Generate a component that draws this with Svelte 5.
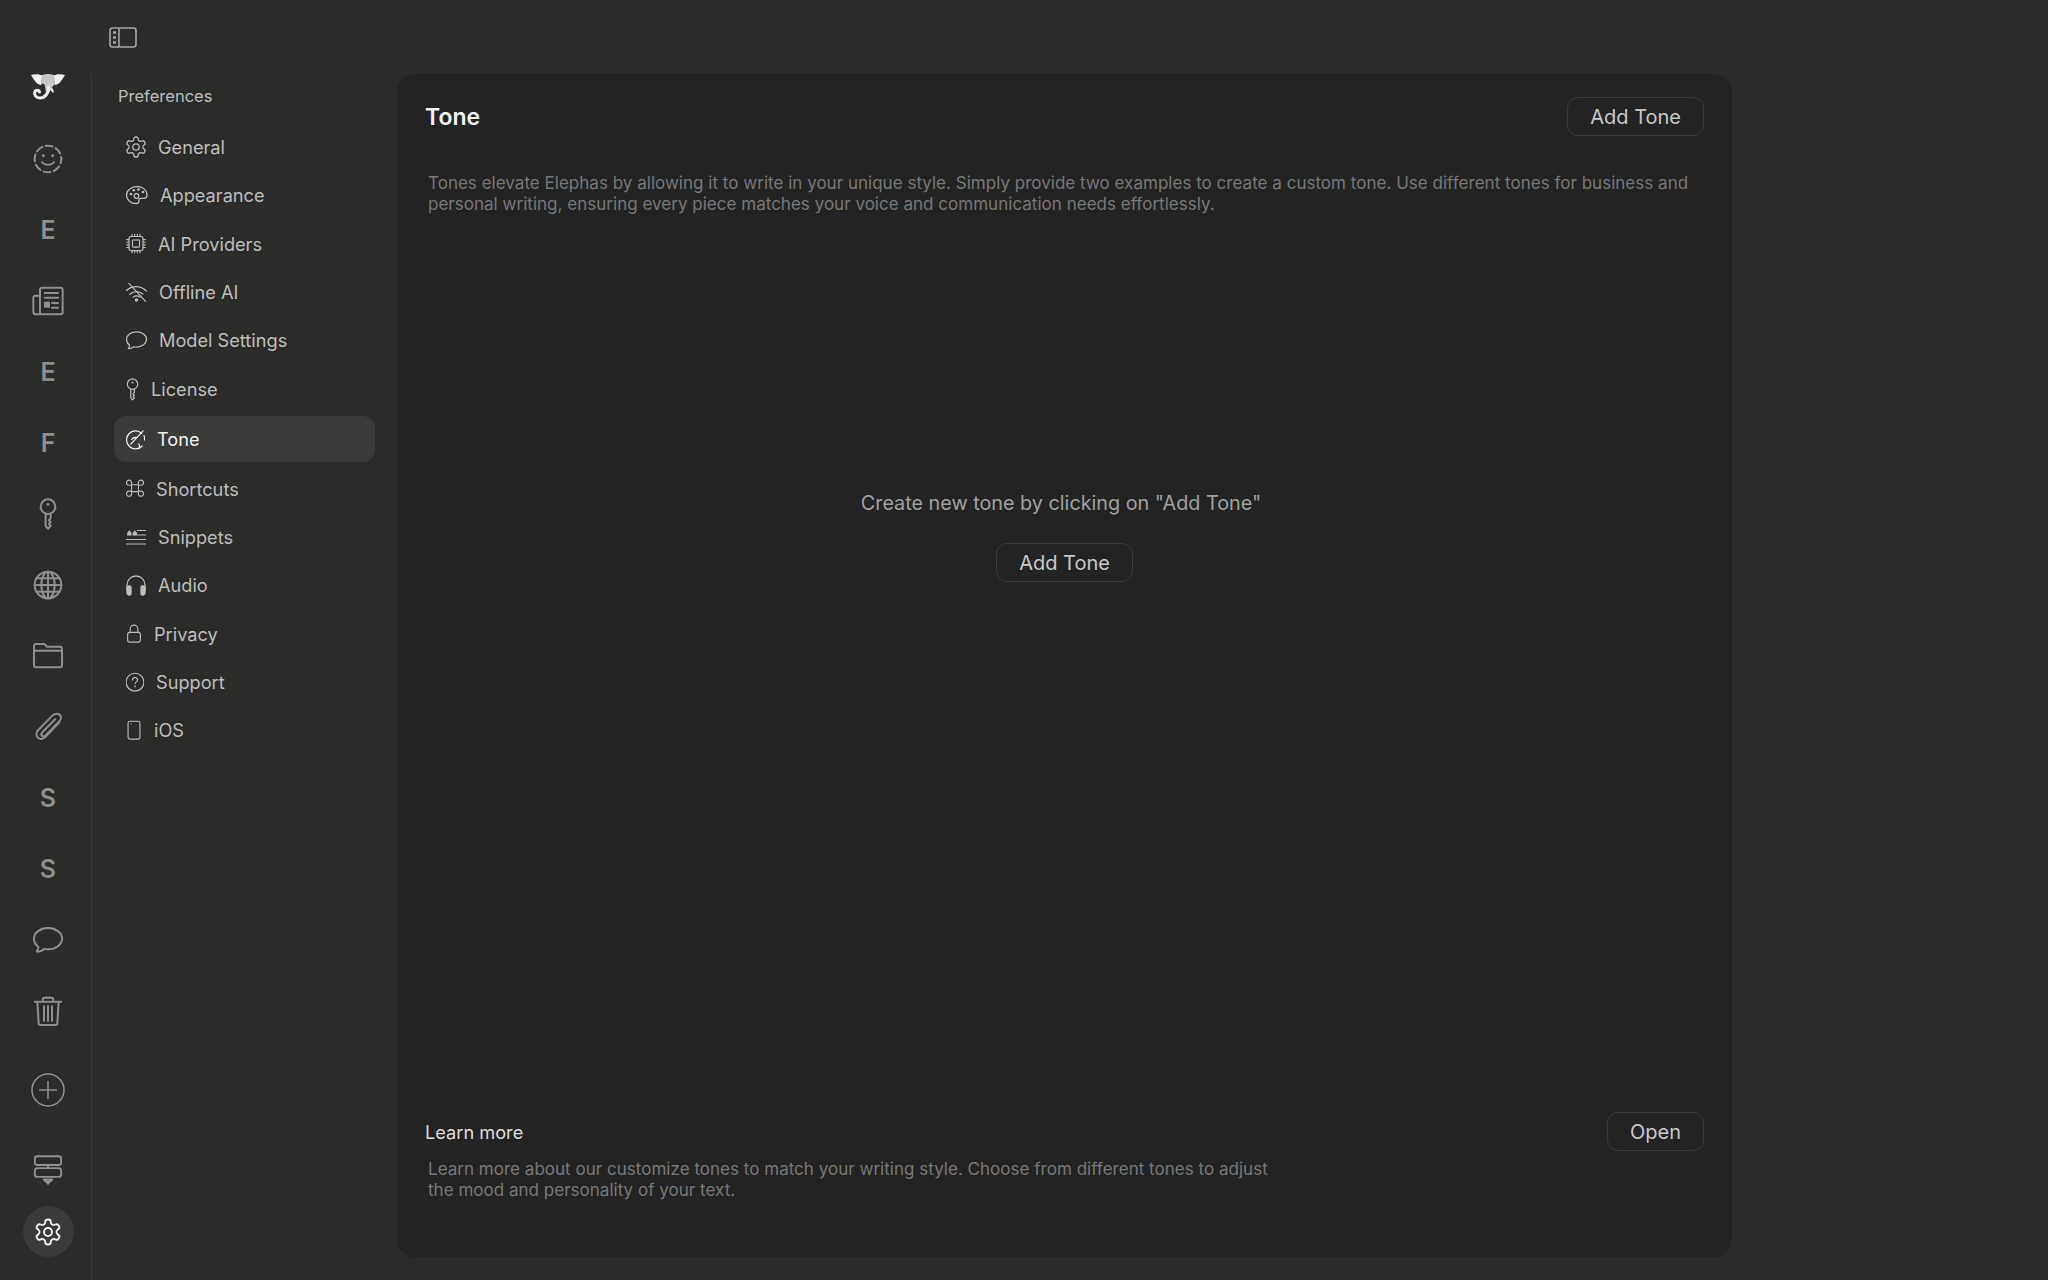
<script>
  const gear = `<path d="M12.22 2h-.44a2 2 0 0 0-2 2v.18a2 2 0 0 1-1 1.73l-.43.25a2 2 0 0 1-2 0l-.15-.08a2 2 0 0 0-2.73.73l-.22.38a2 2 0 0 0 .73 2.73l.15.1a2 2 0 0 1 1 1.72v.51a2 2 0 0 1-1 1.74l-.15.09a2 2 0 0 0-.73 2.73l.22.38a2 2 0 0 0 2.73.73l.15-.08a2 2 0 0 1 2 0l.43.25a2 2 0 0 1 1 1.73V20a2 2 0 0 0 2 2h.44a2 2 0 0 0 2-2v-.18a2 2 0 0 1 1-1.73l.43-.25a2 2 0 0 1 2 0l.15.08a2 2 0 0 0 2.73-.73l.22-.39a2 2 0 0 0-.73-2.73l-.15-.08a2 2 0 0 1-1-1.74v-.5a2 2 0 0 1 1-1.74l.15-.09a2 2 0 0 0 .73-2.73l-.22-.38a2 2 0 0 0-2.73-.73l-.15.08a2 2 0 0 1-2 0l-.43-.25a2 2 0 0 1-1-1.73V4a2 2 0 0 0-2-2z"/><circle cx="12" cy="12" r="3.2"/>`;
  const key = `<circle cx="12" cy="6.500" r="5.500"/><circle cx="12" cy="4.800" r="1" fill="currentColor" stroke="none"/><path d="M10.200 11.700V21l1.800 2 2-2.200-1.400-1.400 1.400-1.400-1.400-1.400 1.400-1.400v-3.500"/>`;
  const bubble = `<path d="M12 3c5.800 0 10.500 3.500 10.500 8s-4.700 8-10.500 8c-1 0-2-.1-2.900-.3-1.200 1.200-3.200 2-5 2.100-.5 0-.7-.5-.4-.8.7-.8 1.100-1.800 1.100-2.900C2.800 15.700 1.500 13.500 1.500 11c0-4.500 4.700-8 10.500-8z"/>`;

  const icons = {
    gear,
    key,
    bubble,
    palette: `<path d="M12.500 3.500c-6 0-11 3.500-11 8.700 0 4.800 4.600 8.300 9.500 8.300 2.200 0 3-1.200 2.800-2.500-.2-1.600.5-2.700 2.300-2.700h2.400c2.100 0 3.500-1.200 3.500-3.300 0-5-4.500-8.500-9.500-8.500z"/><circle cx="6" cy="11" r="1.300" fill="currentColor" stroke="none"/><circle cx="8.800" cy="7.300" r="1.300" fill="currentColor" stroke="none"/><circle cx="13.500" cy="6.500" r="1.300" fill="currentColor" stroke="none"/><circle cx="18" cy="9" r="1.300" fill="currentColor" stroke="none"/><circle cx="11.500" cy="13" r="2.300"/>`,
    chip: `<rect x="4" y="4" width="16" height="16" rx="2.500"/><rect x="8" y="8" width="8" height="8" rx="1"/><path d="M7.500 1.500V4M10.500 1.500V4M13.500 1.500V4M16.500 1.500V4M7.500 20v2.500M10.500 20v2.500M13.500 20v2.500M16.500 20v2.500M1.500 7.500H4M1.500 10.500H4M1.500 13.500H4M1.500 16.500H4M20 7.500h2.500M20 10.500h2.500M20 13.500h2.500M20 16.500h2.500"/>`,
    wifioff: `<path d="M1.500 10c2.500-2.500 6-4.200 10-4.200 4.300 0 8 1.700 11 4.700M5 14c1.800-1.700 4.200-2.800 7-2.800 2.500 0 4.800 1 6.500 2.500M8.500 17c1-.8 2.200-1.300 3.500-1.300s2.500.5 3.500 1.300"/><circle cx="12" cy="20" r="1.900" fill="currentColor" stroke="none"/><path d="M4 2.500 21.500 21.500"/>`,
    tone: `<path d="M18.500 5.500A9.500 9.500 0 1 0 19 19M21 8a9.500 9.500 0 0 1 .5 4.500"/><path d="M7 17 20 3M8 12c1.500-1.700 3-2.400 4.500-2.200M16 21c.8-1.500 .3-3-.5-4.500"/>`,
    command: `<path d="M8 8h8v8H8zM8 8V5.500A3 3 0 1 0 5 8.500h3M16 8V5.500A3 3 0 1 1 19 8.500h-3M8 16v2.500A3 3 0 1 1 5 15.500h3M16 16v2.500a3 3 0 1 0 3-3h-3"/>`,
    snippets: `<path d="M13.500 5h9M13.500 10h9M1.500 15h21M1.500 20h21"/><path d="M2 10.500c0-3 .8-4.800 3.500-5.800v2H7v3.800H2zM8 10.500c0-3 .8-4.800 3.500-5.800v2H13v3.800H8z" fill="currentColor" stroke="none"/>`,
    audio: `<path d="M3 17v-5a9 9 0 0 1 18 0v5"/><path d="M3 15.500c0-1.700 1-2.500 2.500-2.500.8 0 1.500.5 1.500 1.300v6.400c0 .8-.7 1.300-1.500 1.300C4 22 3 21 3 19.500zM21 15.500c0-1.700-1-2.500-2.500-2.500-.8 0-1.500.5-1.500 1.300v6.400c0 .8.7 1.300 1.500 1.300 1.500 0 2.500-1 2.500-2.500z" fill="currentColor"/>`,
    lock: `<rect x="4.500" y="11" width="15" height="11.500" rx="2.500"/><path d="M7.500 11V7a4.500 4.500 0 0 1 9 0v4"/>`,
    help: `<circle cx="12" cy="12" r="10.500"/><path d="M9 9.500a3 3 0 0 1 6 0c0 2-3 2.300-3 4.300"/><circle cx="12" cy="17" r="1" fill="currentColor" stroke="none"/>`,
    phone: `<rect x="5" y="1.500" width="14" height="21" rx="2.200"/><circle cx="8.500" cy="4.500" r=".8" fill="currentColor" stroke="none"/>`,
    smile: `<circle cx="12" cy="12" r="10" stroke-dasharray="5.250 2.600" stroke-dashoffset="2"/><circle cx="8.500" cy="9.500" r="1.100" fill="currentColor" stroke="none"/><circle cx="15.500" cy="9.500" r="1.100" fill="currentColor" stroke="none"/><path d="M7.500 14.500c2.500 2.500 6.500 2.500 9 0"/>`,
    news: `<path d="M6 20.500V3.500A1.500 1.500 0 0 1 7.500 2h14A1.500 1.500 0 0 1 23 3.500v17a1.500 1.500 0 0 1-1.500 1.500H3a2 2 0 0 1-2-2V9.500A1.500 1.500 0 0 1 2.500 8H6"/><path d="M9.500 6h10M9.500 9.500h10M15 13.500h4.500M15 17h4.500M9.500 17"/><rect x="9" y="12.500" width="4.500" height="4.500" fill="currentColor" stroke="none"/>`,
    globe: `<circle cx="12" cy="12" r="10"/><ellipse cx="12" cy="12" rx="5" ry="10"/><path d="M12 2v20M2 12h20M3.500 7h17M3.500 17h17"/>`,
    folder: `<path d="M1.500 19V4.500A1.500 1.500 0 0 1 3 3h5.500a2 2 0 0 1 1.500.7L11 5h10a1.500 1.500 0 0 1 1.500 1.500V19a1.500 1.500 0 0 1-1.500 1.500H3A1.500 1.500 0 0 1 1.500 19zM1.500 8h21"/>`,
    clip: `<path d="M20.500 8.500 10 19.500c-1.700 1.700-4 2-5.700.4-1.700-1.700-1.300-4 .4-5.700L15.500 3.300c1.500-1.500 4-1.800 5.300-.5 1.300 1.300 1.100 3.600-.4 5.100L10.200 18.300c-.8.800-2 1-2.700.3-.7-.7-.5-1.900.3-2.700l9.500-9.700"/>`,
    trash: `<path d="M2 5h20M8 5V3.500A1.500 1.500 0 0 1 9.500 2h5A1.500 1.500 0 0 1 16 3.500V5M4 5l1 16a1.500 1.500 0 0 0 1.500 1.500h11A1.500 1.500 0 0 0 19 21l1-16M9 8.500v11M12 8.500v11M15 8.500v11"/>`,
    plus: `<circle cx="12" cy="12" r="11.300"/><path d="M12 6v12M6 12h12"/>`,
    stack: `<rect x="1.500" y="1" width="21" height="7" rx="2"/><rect x="1.500" y="10.500" width="21" height="7" rx="2"/><path d="M12 8v2.500"/><path d="M8.500 19.500h7L12 23z" fill="currentColor"/>`
  };

  // w = room the icon takes in the row, s = drawing scale
  const prefs = [
    { label: "General", icon: "gear", w: 20, s: 1 },
    { label: "Appearance", icon: "palette", w: 22, s: 1 },
    { label: "AI Providers", icon: "chip", w: 20, s: 0.88 },
    { label: "Offline AI", icon: "wifioff", w: 21, s: 0.95 },
    { label: "Model Settings", icon: "bubble", w: 21, s: 0.95 },
    { label: "License", icon: "key", w: 13, s: 0.95 },
    { label: "Tone", icon: "tone", w: 19, s: 0.95 },
    { label: "Shortcuts", icon: "command", w: 18, s: 0.85 },
    { label: "Snippets", icon: "snippets", w: 20, s: 0.9 },
    { label: "Audio", icon: "audio", w: 20, s: 1 },
    { label: "Privacy", icon: "lock", w: 16, s: 0.85 },
    { label: "Support", icon: "help", w: 18, s: 0.85 },
    { label: "iOS", icon: "phone", w: 16, s: 0.85 }
  ];

  const railItems = ["smile", "E", "news", "E", "F", "key", "globe", "folder", "clip", "S", "S", "bubble", "trash"];
</script>

<div class="app">
  <nav class="rail">
    <div class="logo">
      <svg width="34" height="26" viewBox="0 0 34 26" fill="#f0f0f0">
        <path d="M0 1C4 0 8 0 11 1.500L10.500 11C6 11 3 6 0 1zM34 1c-4-1-8-1-11 .5L23.500 11C28 11 31 6 34 1z"/>
        <path d="M11 1c3.500-1.200 8.500-1.200 12 0l.5 9c-1 2-2.500 3-3.500 5l-1.500 3H15l-1.500-7.500L10.500 9z" fill="#c6c6c6"/>
        <path d="M17.500 13c.3 6-3.500 11-8.500 11-4 0-6.200-3-5.200-6 .8-2.400 4-2.300 4.700 0" fill="none" stroke="#f0f0f0" stroke-width="3" stroke-linecap="round"/>
        <path d="M21 14c1.500 1.200 2 2.800 1.500 5-1.500-1-2.800-2.500-3.500-4z"/>
      </svg>
    </div>
    {#each railItems as item}
      <div class="slot">
        {#if icons[item]}
          <svg width="32" height="32" viewBox="0 0 24 24" fill="none" stroke="currentColor" stroke-width="1.500" stroke-linecap="round" stroke-linejoin="round">{@html icons[item]}</svg>
        {:else}
          <span class="letter">{item}</span>
        {/if}
      </div>
    {/each}
    <div class="rail-bottom">
      <svg width="34" height="34" viewBox="0 0 24 24" fill="none" stroke="currentColor" stroke-width="1.100" stroke-linecap="round">{@html icons.plus}</svg>
      <svg class="stack" width="30" height="30" viewBox="0 0 24 24" fill="none" stroke="currentColor" stroke-width="1.500" stroke-linejoin="round">{@html icons.stack}</svg>
      <div class="gear-btn">
        <svg width="30" height="30" viewBox="0 0 24 24" fill="none" stroke="currentColor" stroke-width="1.500">{@html icons.gear}</svg>
      </div>
    </div>
  </nav>

  <div class="body">
    <div class="toolbar">
      <svg width="28" height="21" viewBox="0 0 28 21" fill="none" stroke="#a6a6a6" stroke-width="1.600">
        <rect x="1" y="1" width="26" height="19" rx="2.500"/>
        <path d="M10 1v19"/>
        <path d="M4 5.500h3M4 10.500h3M4 15.500h3" stroke-width="2.500"/>
      </svg>
    </div>

    <div class="panes">
      <aside class="sidebar">
        <div class="side-title">Preferences</div>
        {#each prefs as p}
          <div class="pref" class:active={p.label === "Tone"} class:license={p.label === "License"}>
            <svg width={p.w} height={24 * p.s} viewBox="{12 - p.w / p.s / 2} 0 {p.w / p.s} 24" fill="none" stroke="currentColor" stroke-width="1.300" stroke-linecap="round" stroke-linejoin="round">{@html icons[p.icon]}</svg>
            <span>{p.label}</span>
          </div>
        {/each}
      </aside>

      <main class="card">
        <div class="head">
          <h1>Tone</h1>
          <button>Add Tone</button>
        </div>
        <p class="desc top">Tones elevate Elephas by allowing it to write in your unique style. Simply provide two examples to create a custom tone. Use different tones for business and personal writing, ensuring every piece matches your voice and communication needs effortlessly.</p>

        <div class="empty">
          <div class="empty-text">Create new tone by clicking on "Add Tone"</div>
          <button>Add Tone</button>
        </div>

        <div class="head">
          <h2>Learn more</h2>
          <button>Open</button>
        </div>
        <p class="desc bottom">Learn more about our customize tones to match your writing style. Choose from different tones to adjust the mood and personality of your text.</p>
      </main>
    </div>
  </div>
</div>

<style>
  :global(body) {
    margin: 0;
    background: #2b2b2a;
    font-family: Inter, "Liberation Sans", sans-serif;
  }
  .app {
    display: flex;
    height: 1280px;
    overflow: hidden;
  }
  .rail {
    width: 86px;
    padding: 0 0 23px 5px;
    margin-top: 74px;
    border-right: 1px solid #3a3a3a;
    display: flex;
    flex-direction: column;
    align-items: center;
    color: #8f8f8f;
    box-sizing: content-box;
    height: 1183px;
    flex: none;
  }
  .logo {
    height: 49px;
    flex: none;
  }
  .slot {
    height: 71px;
    flex: none;
    display: flex;
    align-items: center;
    justify-content: center;
  }
  .letter {
    font-size: 25px;
    font-weight: 600;
    line-height: 1;
    padding-top: 2px;
  }
  .rail-bottom {
    margin-top: auto;
    display: flex;
    flex-direction: column;
    align-items: center;
  }
  .stack {
    margin-top: 48px;
    margin-bottom: 21px;
  }
  .gear-btn {
    width: 51px;
    height: 51px;
    border-radius: 50%;
    background: #3a3a39;
    color: #f0f0f0;
    display: flex;
    align-items: center;
    justify-content: center;
  }
  .body {
    flex: 1;
    display: flex;
    flex-direction: column;
  }
  .toolbar {
    height: 74px;
    flex: none;
    display: flex;
    align-items: center;
    padding-left: 17px;
  }
  .panes {
    flex: 1;
    display: flex;
    min-height: 0;
  }
  .sidebar {
    width: 305px;
    box-sizing: border-box;
    padding: 0 22px;
    flex: none;
  }
  .side-title {
    height: 44px;
    margin-bottom: 5px;
    display: flex;
    align-items: center;
    padding-left: 4px;
    font-size: 16.500px;
    font-weight: 400;
    color: #bdbdbd;
  }
  .pref {
    height: 48.300px;
    display: flex;
    align-items: center;
    gap: 12px;
    padding-left: 12px;
    font-size: 18.200px;
    color: #bdbdbd;
    box-sizing: border-box;
  }
  .pref.license {
    margin-top: 0.700px;
  }
  .pref.active {
    height: 46px;
    margin: 3px 0 2px;
    border-radius: 12px;
    background: #3a3a39;
    color: #f2f2f2;
  }
  .card {
    width: 1335px;
    flex: none;
    margin-bottom: 23px;
    background: #232323;
    border-radius: 18px;
    padding: 23px 28px 0;
    box-sizing: border-box;
    display: flex;
    flex-direction: column;
  }
  .head {
    display: flex;
    justify-content: space-between;
    align-items: center;
  }
  h1 {
    margin: 0;
    font-size: 23px;
    font-weight: 600;
    color: #f2f2f2;
  }
  h2 {
    margin: 0;
    font-size: 18.200px;
    font-weight: 400;
    color: #dcdcdc;
  }
  button {
    height: 39px;
    padding: 0 22px;
    font: 400 20px Inter, "Liberation Sans", sans-serif;
    color: #c8c8c8;
    background: transparent;
    border: 1px solid #3a3a3a;
    border-radius: 11px;
  }
  .desc {
    margin: 0;
    padding-left: 3px;
    font-size: 17px;
    letter-spacing: 0.020px;
    line-height: 21px;
    color: #777777;
  }
  .desc.top {
    margin-top: 37px;
  }
  .desc.bottom {
    margin-top: 8px;
    max-width: 860px;
    margin-bottom: 56px;
  }
  .empty {
    flex: 1;
    display: flex;
    flex-direction: column;
    align-items: center;
    padding-top: 276px;
  }
  .empty-text {
    font-size: 19.800px;
    color: #a0a0a0;
    margin: 0 7px 28px 0;
    line-height: 24px;
  }
</style>
